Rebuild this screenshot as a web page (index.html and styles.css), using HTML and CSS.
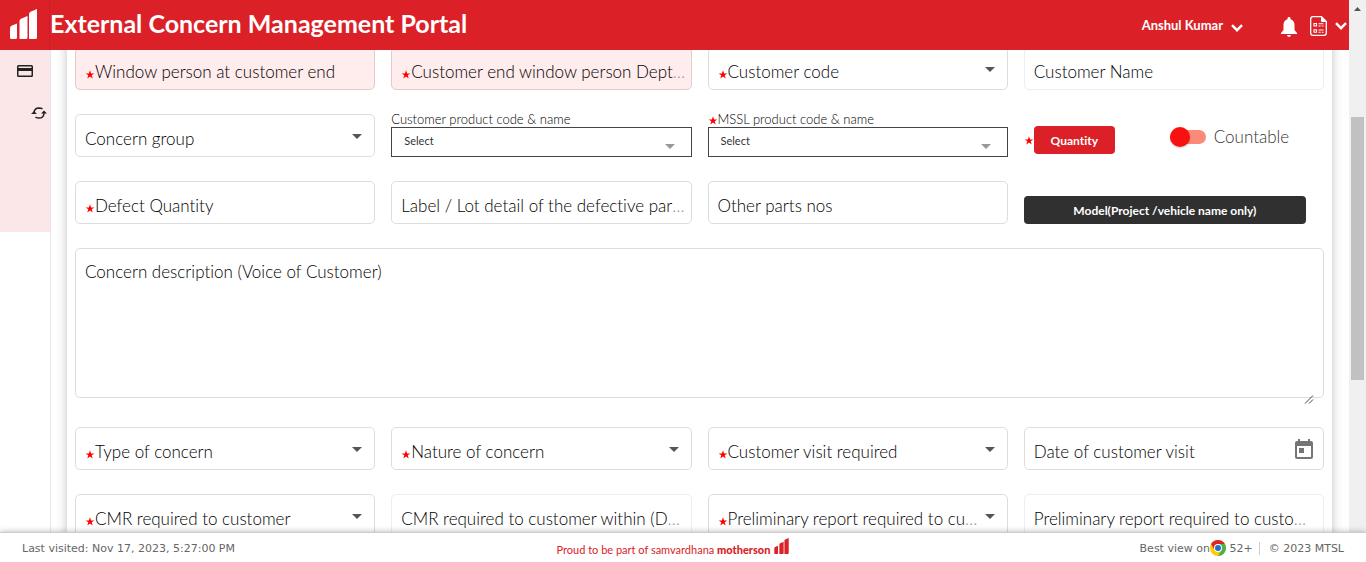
FILE: index.html
```
<!DOCTYPE html>
<html lang="en">
<head>
<meta charset="utf-8">
<title>External Concern Management Portal</title>
<link rel="stylesheet" href="styles.css">
</head>
<body>
<svg class="sprite" aria-hidden="true">
  <symbol id="star" viewBox="0 0 10 10"><path d="M5 .4 6.2 3.8H9.8L6.9 5.9 8 9.4 5 7.3 2 9.4 3.1 5.9.2 3.8H3.8Z"/></symbol>
  <symbol id="bars" viewBox="0 0 27 30"><path d="M0 19q0-1.500 1.500-2.200L7 14.500V28.500q0 1.500-1.500 1.500H1.500Q0 30 0 28.500ZM9.500 12q0-1.500 1.500-2.200L17.500 7V28.500q0 1.500-1.500 1.500H9.500ZM19 5q0-1.500 1.500-2.200L27 0V28.500q0 1.500-1.500 1.500H19Z"/></symbol>
  <symbol id="caret" viewBox="0 0 10 5"><path d="M0 0H10L5 5Z"/></symbol>
  <symbol id="chevron" viewBox="0 0 12 8"><path d="M1 1.200 6 6.200 11 1.200" fill="none" stroke="currentColor" stroke-width="2.400"/></symbol>
</svg>
<div class="app">
  <header class="topbar">
    <a class="logo" href="#" aria-label="Home"><svg width="27" height="30"><use href="#bars"/></svg></a>
    <h1 class="title">External Concern Management Portal</h1>
    <button class="user" type="button">Anshul Kumar <svg width="12" height="8"><use href="#chevron"/></svg></button>
    <button class="icon-button bell" type="button" aria-label="Notifications">
      <svg width="16" height="20" viewBox="0 0 16 20"><path d="M8 0a1.500 1.500 0 0 1 1.500 1.600v.6C12 3 13.500 5 13.500 8v5L16 16v1H0v-1l2.500-3V8C2.500 5 4 3 6.500 2.200v-.6A1.500 1.500 0 0 1 8 0ZM6 18h4q-.3 2-2 2t-2-2Z"/></svg>
    </button>
    <button class="icon-button menu" type="button" aria-label="Documents">
      <svg width="17" height="20" viewBox="0 0 17 20"><g fill="none" stroke="#fff"><path d="M3 .7H11.500L16.300 5.500V17q0 2.300-2.300 2.300H3Q.7 19.300.7 17V3Q.7.7 3 .7Z" stroke-width="1.300"/><path d="M11.500.7V5.500H16.300Z" fill="#fff"/><path d="M4 7.500H6.500V10H4ZM4 13.700H6.500V16.200H4ZM8.500 7.700h5M8.500 10h2.200M11.800 10h1.700M8.500 14h5M8.500 16.300h2.200M11.800 16.300h1.700" stroke-width="1.100"/></g></svg>
      <svg width="12" height="8"><use href="#chevron"/></svg>
    </button>
  </header>

  <nav class="sidebar" aria-label="Main">
    <div class="side-menu">
      <a class="side-link" href="#" aria-label="Concerns"><svg width="16" height="12" viewBox="0 0 16 12"><path fill-rule="evenodd" d="M1.500 0h13Q16 0 16 1.500v9q0 1.500-1.500 1.500h-13Q0 12 0 10.500v-9Q0 0 1.500 0ZM1.500 1.400V3h13V1.400ZM1.500 6v4.500h13V6Z"/></svg></a>
      <a class="side-link side-link-end" href="#" aria-label="Refresh"><svg width="16" height="12" viewBox="0 0 16 12"><path d="M3 7V5.500Q3.500 1 8 .9q2 0 3.500 1M13 5v1.500Q12.500 11 8 11.100q-2 0-3.500-1" fill="none" stroke="#222" stroke-width="1.500"/><path d="M0 7H6L3 4ZM10 6.500h6L13 3.500Z"/></svg></a>
    </div>
  </nav>

  <main class="content">
    <form class="card">
      <div class="field invalid"><input id="wp" type="text"><label for="wp"><svg class="star"><use href="#star"/></svg><span>Window person at customer end</span></label></div>
      <div class="field invalid"><input id="dept" type="text"><label for="dept"><svg class="star"><use href="#star"/></svg><span>Customer end window person Dept. name</span></label></div>
      <div class="field dropdown"><select id="code"><option></option></select><label for="code"><svg class="star"><use href="#star"/></svg><span>Customer code</span></label><svg class="caret"><use href="#caret"/></svg></div>
      <div class="field muted"><input id="name" type="text"><label for="name"><span>Customer Name</span></label></div>

      <div class="field dropdown"><select id="group"><option></option></select><label for="group"><span>Concern group</span></label><svg class="caret"><use href="#caret"/></svg></div>
      <div class="picker"><label for="cpc">Customer product code &amp; name</label><div class="picker-box"><select id="cpc"><option>Select</option></select><svg class="caret"><use href="#caret"/></svg></div></div>
      <div class="picker"><label for="mpc"><svg class="star"><use href="#star"/></svg>MSSL product code &amp; name</label><div class="picker-box"><select id="mpc"><option>Select</option></select><svg class="caret"><use href="#caret"/></svg></div></div>
      <div class="quantity"><svg class="star"><use href="#star"/></svg><button class="button red" type="button">Quantity</button><label class="toggle"><input type="checkbox" role="switch"><span>Countable</span></label></div>

      <div class="field"><input id="defect" type="text"><label for="defect"><svg class="star"><use href="#star"/></svg><span>Defect Quantity</span></label></div>
      <div class="field"><input id="lot" type="text"><label for="lot"><span>Label / Lot detail of the defective part(s)</span></label></div>
      <div class="field"><input id="parts" type="text"><label for="parts"><span>Other parts nos</span></label></div>
      <div class="model"><button class="button dark" type="button">Model(Project /vehicle name only)</button></div>

      <div class="field area"><textarea id="desc"></textarea><label for="desc"><span>Concern description (Voice of Customer)</span></label><svg class="grip" width="10" height="9" viewBox="0 0 10 9"><path d="M1 8.500 9 .5M5 8.500 9 4.500" stroke="#444"/></svg></div>

      <div class="field dropdown"><select id="type"><option></option></select><label for="type"><svg class="star"><use href="#star"/></svg><span>Type of concern</span></label><svg class="caret"><use href="#caret"/></svg></div>
      <div class="field dropdown"><select id="nature"><option></option></select><label for="nature"><svg class="star"><use href="#star"/></svg><span>Nature of concern</span></label><svg class="caret"><use href="#caret"/></svg></div>
      <div class="field dropdown"><select id="visit"><option></option></select><label for="visit"><svg class="star"><use href="#star"/></svg><span>Customer visit required</span></label><svg class="caret"><use href="#caret"/></svg></div>
      <div class="field"><input id="date" type="text"><label for="date"><span>Date of customer visit</span></label><button class="calendar" type="button" aria-label="Open calendar"><svg width="18" height="20" viewBox="0 0 18 20"><path fill-rule="evenodd" d="M3 0h2v2h8V0h2v2h1q2 0 2 2v14q0 2-2 2H2q-2 0-2-2V4q0-2 2-2h1ZM2 7v11h14V7ZM4 9h5v5H4Z"/></svg></button></div>

      <div class="field dropdown"><select id="cmr"><option></option></select><label for="cmr"><svg class="star"><use href="#star"/></svg><span>CMR required to customer</span></label><svg class="caret"><use href="#caret"/></svg></div>
      <div class="field muted"><input id="cmrdays" type="text"><label for="cmrdays"><span>CMR required to customer within (Days)</span></label></div>
      <div class="field dropdown"><select id="prelim"><option></option></select><label for="prelim"><svg class="star"><use href="#star"/></svg><span>Preliminary report required to customer</span></label><svg class="caret"><use href="#caret"/></svg></div>
      <div class="field muted"><input id="prelimdays" type="text"><label for="prelimdays"><span>Preliminary report required to customer within</span></label></div>
    </form>
  </main>

  <div class="scrollbar" aria-hidden="true"><svg class="arrow" width="7" height="4" viewBox="0 0 7 4"><path d="M0 4 3.500 0 7 4Z"/></svg><div class="thumb"></div></div>

  <footer class="footer">
    <span>Last visited: Nov 17, 2023, 5:27:00 PM</span>
    <span class="brand"><span>Proud to be part of samvardhana <b>motherson</b></span><svg width="15" height="16"><use href="#bars"/></svg></span>
    <span class="legal"><span class="browser">Best view on<svg width="16" height="16" viewBox="0 0 16 16"><circle cx="8" cy="8" r="8" fill="#fc0"/><path d="M1.100 4A8 8 0 0 1 14.900 4H8L4.500 10Z" fill="#dd2722"/><path d="M14.900 4A8 8 0 0 1 8 16L11.500 10 8 4Z" fill="#4caf50"/><circle cx="8" cy="8" r="4" fill="#fff"/><circle cx="8" cy="8" r="3" fill="#1e70cf"/></svg> 52+</span><span class="copyright">© 2023 MTSL</span></span>
  </footer>
</div>
</body>
</html>
```

FILE: styles.css
```
* { box-sizing: border-box; }
body { margin: 0; background: #fff; color: #000; font-family: Lato, "Open Sans", sans-serif; font-size: 17px; font-weight: 300; font-variant-ligatures: none; }
button, input, select, textarea { font: inherit; color: inherit; margin: 0; }
button { padding: 0; border: 0; background: none; cursor: pointer; }
svg { display: block; flex: none; fill: currentColor; }
.sprite { width: 0; height: 0; position: absolute; }

.app {
  display: grid;
  grid-template: "top top bar" 50px "side main bar" minmax(0, 1fr) "foot foot foot" 30px / 51px minmax(0, 1fr) 17px;
  height: 100vh;
  overflow: hidden;
}

.topbar { grid-area: top; z-index: 2; display: flex; align-items: center; background: #db2127; color: #fff; }
.logo { display: flex; align-items: center; align-self: stretch; width: 50px; padding: 0 0 3px 10px; border-right: 1px solid #c91f25; color: #fff; }
.title { flex: 1; margin: 0 0 5px; font-size: 25px; line-height: 30px; font-weight: 700; white-space: nowrap; }
.user { display: flex; align-items: center; gap: 8px; font-size: 13px; font-weight: 700; }
.user svg { margin-top: 6px; }
.bell { margin: 4px 13px 0 38px; }
.menu { display: flex; align-items: center; gap: 8px; margin: 2px 2px 0 0; }

.sidebar { grid-area: side; border-right: 1px solid #e6e6e6; color: #222; }
.side-menu { height: 182px; padding: 15px 3px 0 17px; background: #fce7e8; }
.side-link { display: flex; color: inherit; margin-bottom: 30px; }
.side-link-end { justify-content: flex-end; }

.content { grid-area: main; overflow: hidden; padding: 0 17px 0 16px; }
.card {
  display: grid;
  grid-template-columns: repeat(4, minmax(0, 1fr));
  gap: 24px 16px;
  margin-top: -11px;
  padding: 8px 8px 24px;
  background: #fff;
  box-shadow: 0 0 10px rgba(0, 0, 0, .25);
}
.field { display: grid; grid-template: minmax(0, 1fr) / minmax(0, 1fr); height: 43px; border: 1px solid #ddd; border-radius: 5px; background: #fff; }
.field > * { grid-area: 1 / 1; min-width: 0; }
.field input, .field select, .field textarea { width: 100%; height: 100%; padding: 7px 9px 0; border: 0; border-radius: 4px; background: none; appearance: none; resize: none; }
.field label { align-self: center; margin: 7px 4px 0 9px; overflow: hidden; text-overflow: ellipsis; white-space: nowrap; line-height: 22px; color: #999; pointer-events: none; }
.field label span { color: #000; }
.field.dropdown label { margin-right: 26px; }
.invalid { background: #ffecec; border-color: #e0cccc; }
.muted { border-color: #eee; }
.field.muted label { margin-right: 8px; }
.star { display: inline-block; width: 10px; height: 9px; color: #f00; vertical-align: -1px; }
.caret { width: 10px; height: 5px; color: #555; pointer-events: none; }
.field .caret { align-self: center; justify-self: end; margin: 2px 12px 0 0; }
.area { grid-column: 1 / -1; height: 150px; margin-bottom: 5px; }
.field.area label { align-self: start; margin-top: 12px; }
.field .grip { place-self: end; margin: 0 9px -7px 0; }
.field .calendar { place-self: center end; margin-right: 10px; color: #757575; }

.picker { display: flex; flex-direction: column; font-size: 13px; }
.picker label { height: 13px; line-height: 11px; white-space: nowrap; }
.picker-box { display: grid; height: 30px; border: 1px solid #444; }
.picker-box > * { grid-area: 1 / 1; }
.picker-box select { padding: 0 12px 4px; border: 0; background: none; appearance: none; font-size: 11px; font-weight: 400; color: #333; border-radius: 0; }
.picker-box .caret { place-self: end; margin: 0 16px 7px 0; color: #999; }

.quantity { display: flex; align-items: center; padding-top: 9px; }
.button { height: 28px; border-radius: 4px; color: #fff; font-size: 12px; font-weight: 700; }
.red { width: 81px; background: #db2127; }
.toggle { display: flex; align-items: center; gap: 8px; margin: -7px 0 0 55px; color: #333; line-height: 20px; }
.toggle input { display: flex; align-items: center; width: 36px; height: 14px; border-radius: 7px; background: #f98b78; appearance: none; }
.toggle input::before { content: ""; width: 20px; height: 20px; border-radius: 50%; background: #f91010; box-shadow: 0 1px 2px #0003; }
.model { display: flex; align-items: flex-end; padding-right: 18px; }
.dark { flex: 1; background: #303030; }

.scrollbar { grid-area: bar; display: flex; flex-direction: column; align-items: center; padding: 7px 2px 0; background: #f0f0f0; color: #555; }
.thumb { width: 100%; height: 263px; margin-top: 106px; background: #c1c1c1; }

.footer { grid-area: foot; z-index: 3; display: grid; grid-template-columns: 1fr auto 1fr; align-items: center; padding: 1px 22px 0; border-top: 1px solid #ccc; box-shadow: 0 0 6px rgba(0, 0, 0, .3); background: #fff; color: #666; font: 11px "DejaVu Sans", sans-serif; }
.brand { display: flex; align-items: flex-end; gap: 4px; padding: 0 20px 4px 0; color: #db2127; font: 11px/12px Lato, sans-serif; }
.brand span { margin-bottom: -2px; }
.brand b { font-weight: 900; }
.legal, .browser { display: flex; align-items: center; justify-content: flex-end; }
.browser { white-space: pre; }
.copyright { margin-left: 6px; padding-left: 9px; border-left: 1px solid #ccc; }
```
